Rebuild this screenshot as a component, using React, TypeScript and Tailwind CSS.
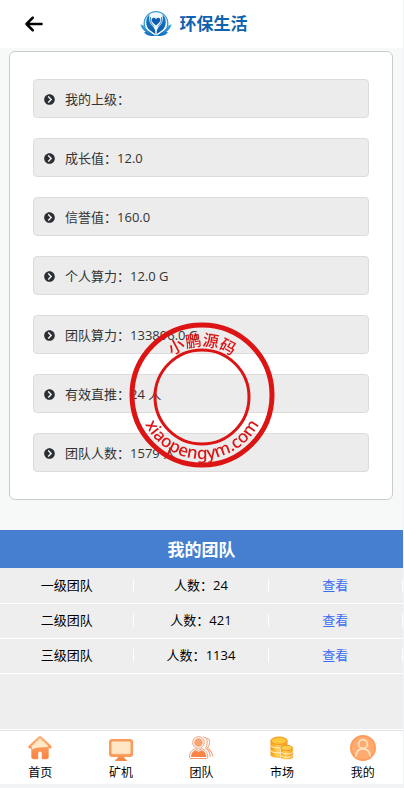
import React from 'react';
import { FaChevronCircleRight } from 'react-icons/fa';
import { FaArrowLeft } from 'react-icons/fa6';

const STATS = [
  { label: '我的上级', value: '' },
  { label: '成长值', value: '12.0' },
  { label: '信誉值', value: '160.0' },
  { label: '个人算力', value: '12.0 G' },
  { label: '团队算力', value: '133896.0 G' },
  { label: '有效直推', value: '24 人' },
  { label: '团队人数', value: '1579 人' },
];

const TEAMS = [
  { name: '一级团队', count: 24 },
  { name: '二级团队', count: 421 },
  { name: '三级团队', count: 1134 },
];

const Logo: React.FC = () => (
  <svg width="32" height="28" viewBox="0 0 32 28" aria-hidden="true">
    <defs>
      <linearGradient id="logo-blue" x1="0" y1="0" x2="0" y2="1">
        <stop offset="0" stopColor="#1a7cc8" />
        <stop offset="1" stopColor="#0b5aa8" />
      </linearGradient>
      <linearGradient id="logo-sky" x1="0" y1="0" x2="0" y2="1">
        <stop offset="0" stopColor="#3bb0e6" />
        <stop offset="1" stopColor="#1268b8" />
      </linearGradient>
    </defs>
    <circle cx="16" cy="13.500" r="11.800" fill="#eef8fd" stroke="#3a9bd6" strokeWidth="1.300" />
    <path d="M9.500 4.500C5 8 5.500 16 9 19.500C11 21.500 13.500 22.500 15.300 24C15.500 20 14.500 18 12 15.500C9.500 13 8.500 9.500 9.500 4.500Z" fill="url(#logo-blue)" />
    <path d="M22.500 4.500C27 8 26.500 16 23 19.500C21 21.500 18.500 22.500 16.700 24C16.500 20 17.500 18 20 15.500C22.500 13 23.500 9.500 22.500 4.500Z" fill="url(#logo-blue)" />
    <path d="M10.500 7C9.800 11 11.500 14 14 16.500M21.500 7C22.200 11 20.500 14 18 16.500" fill="none" stroke="#2f86cb" strokeWidth="1" />
    <path d="M16 15.500C12.500 12.800 11.300 11 11.700 9.300C12.300 7.200 15.200 7.200 16 9.300C16.800 7.200 19.700 7.200 20.300 9.300C20.700 11 19.500 12.800 16 15.500Z" fill="#0d5cad" />
    <path d="M0.500 14.500C2.500 14.500 4.500 16 6 18.500C8 21.500 12 22.500 14.800 26C9.500 26.500 5.500 25 4 22L6 22C3 20.500 1.200 17.500 0.500 14.500Z" fill="url(#logo-sky)" />
    <path d="M31.500 14.500C29.500 14.500 27.500 16 26 18.500C24 21.500 20 22.500 17.200 26C22.500 26.500 26.500 25 28 22L26 22C29 20.500 30.800 17.500 31.500 14.500Z" fill="url(#logo-sky)" />
    <path d="M6 17.500C8 20.500 12 22 15 25M26 17.500C24 20.500 20 22 17 25" fill="none" stroke="#fff" strokeWidth="0.700" />
  </svg>
);

const HomeIcon: React.FC = () => (
  <svg width="26" height="26" viewBox="0 0 26 26" aria-hidden="true">
    <defs>
      <linearGradient id="home-orange" x1="0" y1="0" x2="0" y2="1">
        <stop offset="0" stopColor="#ffb47a" />
        <stop offset="1" stopColor="#f77f3a" />
      </linearGradient>
    </defs>
    <path d="M11.500 2Q13 0.800 14.500 2L24 10.800Q25.300 12.500 23.300 13.300H21.500V22Q21.500 24 19.500 24H15V18Q15 16.500 13 16.500Q11 16.500 11 18V24H6.500Q4.500 24 4.500 22V13.300H2.700Q0.700 12.500 2 10.800Z" fill="url(#home-orange)" stroke="#f9a46c" strokeWidth="0.600" />
    <path d="M12 4.200Q13 3.400 14 4.200L21.500 11.300Q20 12.500 16 12.200Q9 12 5 14.200V12.200L4.300 11.500Z" fill="#ffe9c8" />
  </svg>
);

const MinerIcon: React.FC = () => (
  <svg width="26" height="26" viewBox="0 0 26 26" aria-hidden="true">
    <rect x="1" y="4" width="24" height="18" rx="3" fill="#fb9a5c" />
    <rect x="3.500" y="6.500" width="19" height="12.500" rx="1.500" fill="#ffe6c5" stroke="#ffc28e" strokeWidth="0.600" />
    <path d="M10 22H16Q16.500 24 19 25Q19.500 26 18 26H8Q6.500 26 7 25Q9.500 24 10 22Z" fill="#f58a48" />
  </svg>
);

const TeamIcon: React.FC = () => (
  <svg width="26" height="26" viewBox="0 0 26 26" fill="none" aria-hidden="true">
    <path d="M17.500 3C20.500 3 22 5 21.500 8.500Q21 11.500 19.500 13C22 15 24.500 18 24.800 21.500M15 2C18.500 2 20 5 19 9Q18.500 11.500 17.500 13C20 14.500 22 17.500 22.300 22" stroke="#f5aa88" strokeWidth="1.100" />
    <circle cx="10.500" cy="7.500" r="5.800" fill="#fff" stroke="#f69b70" strokeWidth="1" />
    <circle cx="10.500" cy="7.500" r="4.300" fill="#f9a472" />
    <path d="M1.500 22C1.500 17 4.500 14.300 7.500 13.800L10.500 15.500L13.500 13.800C17 14.500 19.500 17 19.800 22Q19.800 23.500 18.500 23.500H3Q1.500 23.500 1.500 22Z" fill="#fff" stroke="#f69b70" strokeWidth="1" />
    <path d="M3 22C3.200 17.800 5.500 15.500 7.500 15.200L10.500 16.800L13.500 15.200C16 15.700 18 17.800 18.300 22Z" fill="#f88446" />
  </svg>
);

const MarketIcon: React.FC = () => (
  <svg width="26" height="26" viewBox="0 0 26 26" aria-hidden="true">
    <defs>
      <linearGradient id="coin-gold" x1="0" y1="0" x2="1" y2="0">
        <stop offset="0" stopColor="#f59a16" />
        <stop offset="0.4" stopColor="#ffcf50" />
        <stop offset="1" stopColor="#f39a1d" />
      </linearGradient>
    </defs>
    <path d="M1.500 5.500V20C3 24 17 24 18.500 20V5.500Z" fill="url(#coin-gold)" />
    <path d="M1.500 10.500C4 13.800 16 13.800 18.500 10.500M1.500 15.500C4 18.800 16 18.800 18.500 15.500" fill="none" stroke="#fff3d0" strokeWidth="1" />
    <ellipse cx="10" cy="5.800" rx="8" ry="3.600" fill="#ffc83d" stroke="#f2a024" strokeWidth="1.200" />
    <path d="M11.300 13V22.500C13 25.500 22.500 25.500 24.200 22.500V13Z" fill="url(#coin-gold)" stroke="#fff" strokeWidth="0.800" />
    <path d="M12 17C14 19.500 22 19.500 23.500 17M12 20.500C14 23 22 23 23.500 20.500" fill="none" stroke="#fff3d0" strokeWidth="0.900" />
    <ellipse cx="17.700" cy="13" rx="5.800" ry="2.600" fill="#ffce4b" stroke="#ee991c" strokeWidth="1" />
  </svg>
);

const MineIcon: React.FC = () => (
  <svg width="26" height="26" viewBox="0 0 26 26" fill="none" aria-hidden="true">
    <circle cx="13" cy="13" r="13" fill="#ff9c5b" />
    <circle cx="13" cy="13" r="11" fill="#ffab70" />
    <circle cx="13" cy="9" r="4.400" stroke="#ffe3c2" strokeWidth="1.600" />
    <path d="M5.800 21C6.300 16.500 9 13.800 13 13.800C17 13.800 19.700 16.500 20.200 21" stroke="#ffe3c2" strokeWidth="1.700" strokeLinecap="round" />
  </svg>
);

const TABS = [
  { label: '首页', Icon: HomeIcon },
  { label: '矿机', Icon: MinerIcon },
  { label: '团队', Icon: TeamIcon },
  { label: '市场', Icon: MarketIcon },
  { label: '我的', Icon: MineIcon },
];

const Stamp: React.FC = () => (
  <div className="pointer-events-none fixed inset-0 flex items-center justify-center">
    <svg width="148" height="148" viewBox="0 0 148 148" fill="none">
      <defs>
        <path id="stamp-top" d="M25 75A49 49 0 0 1 123 75" />
        <path id="stamp-bottom" d="M10 75A64 64 0 0 0 138 75" />
      </defs>
      <circle cx="74" cy="75" r="70" stroke="#dc1414" strokeWidth="5" />
      <circle cx="74" cy="77" r="47" stroke="#dc1414" strokeWidth="3" />
      <g fill="#dc1414" textAnchor="middle" className="font-['Noto_Sans','Noto_Sans_CJK_SC',sans-serif] font-medium">
        <text className="text-base"><textPath href="#stamp-top" startOffset="50%">小鹏源码</textPath></text>
        <text className="text-[17px]"><textPath href="#stamp-bottom" startOffset="50%">xiaopengym.com</textPath></text>
      </g>
    </svg>
  </div>
);

const App: React.FC = () => {
  return (
    <div className="flex min-h-screen flex-col bg-[#f1f3f5] pr-px pb-1 font-['Open_Sans','Noto_Sans_CJK_SC',sans-serif] text-[13px] text-black">
      <header className="grid h-12 grid-cols-[1fr_auto_1fr] items-center bg-white">
        <button type="button" aria-label="返回" className="ml-6 w-5">
          <FaArrowLeft size={20} />
        </button>
        <h1 className="flex items-center gap-2 pr-4 text-[17px] font-bold text-[#0f62ae]">
          <Logo />
          环保生活
        </h1>
      </header>

      <main className="flex flex-1 flex-col bg-[#f7f9f8]">
        <section className="mt-[3px] mr-[10px] ml-[9px] rounded-md border border-[#c9cccc] bg-white px-[23px] py-[27px]">
          <ul className="flex flex-col gap-5">
            {STATS.map((s) => (
              <li key={s.label} className="flex h-[39px] items-center gap-[10px] rounded border border-[#dcdcdc] bg-[#ececec] px-[10px] pt-[2px] text-[#333]">
                <FaChevronCircleRight size={11} className="text-[#2b2f33]" />
                <span>{s.label}：{s.value}</span>
              </li>
            ))}
          </ul>
        </section>

        <section className="mt-[30px] flex-1 border-b border-white bg-[#eee]">
          <h2 className="flex h-[38px] items-center justify-center bg-[#467fd0] pt-[2px] text-[17px] font-bold text-white">我的团队</h2>
          <table className="w-full table-fixed text-center">
            <tbody>
              {TEAMS.map((team) => (
                <tr key={team.name} className="h-[35px] border-b border-white">
                  <td><div className="border-r border-white leading-[13px]">{team.name}</div></td>
                  <td><div className="border-r border-white leading-[13px]">人数：{team.count}</div></td>
                  <td><div className="border-r border-white leading-[13px]"><a href="#team" className="text-[#3a6cf4]">查看</a></div></td>
                </tr>
              ))}
            </tbody>
          </table>
        </section>
      </main>

      <nav className="grid grid-cols-5 border-t border-[#e4e4e4] bg-white pt-1 pb-[3px]">
        {TABS.map(({ label, Icon }) => (
          <a key={label} href="#tab" className="flex flex-col items-center gap-1 text-xs">
            <Icon />
            {label}
          </a>
        ))}
      </nav>

      <Stamp />
    </div>
  );
};

export default App;
